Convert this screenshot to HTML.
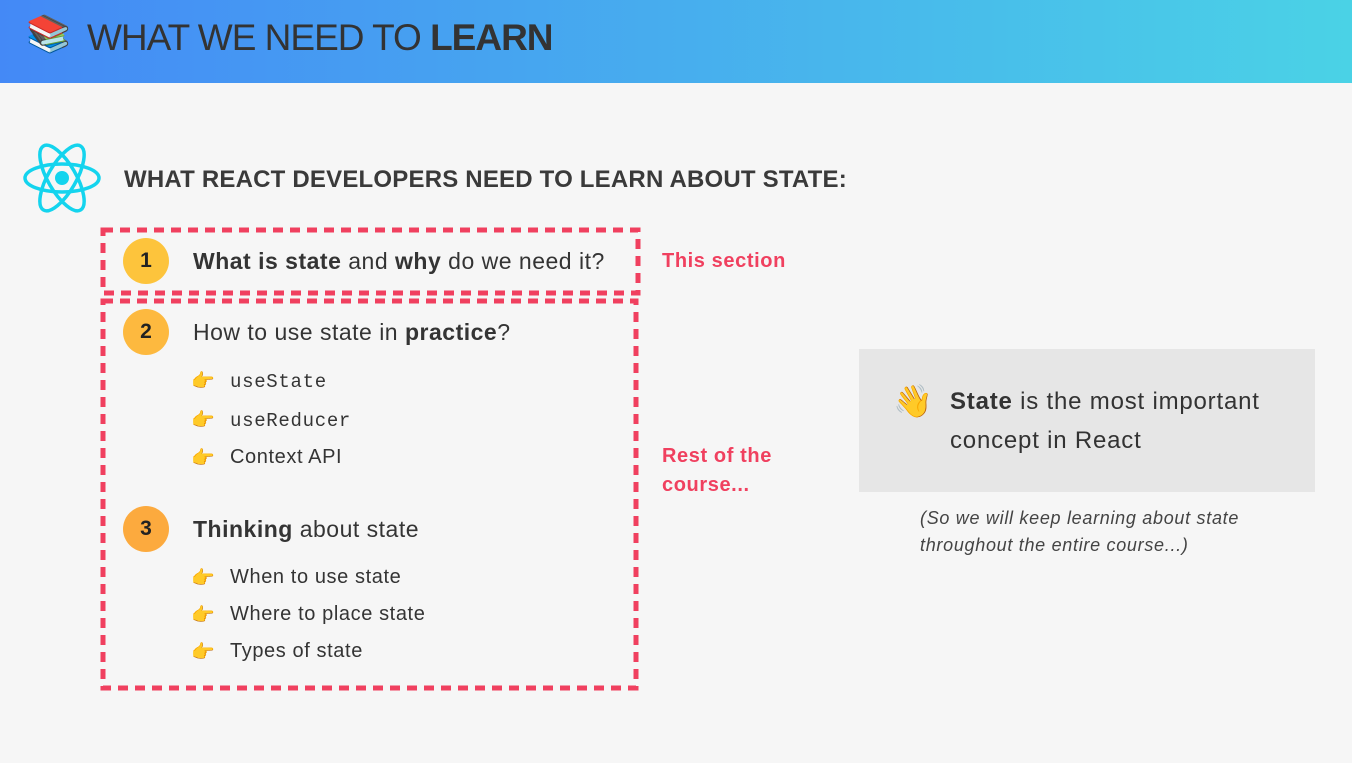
<!DOCTYPE html>
<html><head><meta charset="utf-8"><style>
*{margin:0;padding:0;box-sizing:border-box}
body{width:1352px;height:763px;background:#f6f6f6;font-family:"Liberation Sans",sans-serif;color:#343434;position:relative;overflow:hidden}
.hdr{position:absolute;left:0;top:0;width:1352px;height:83px;background:linear-gradient(90deg,#4489f6,#4ad2e6)}
.hdr h1{position:absolute;left:87px;top:17px;font-size:37px;font-weight:normal;color:#333;letter-spacing:-1px}
.abs{position:absolute;white-space:nowrap}
.circ{position:absolute;width:46px;height:46px;border-radius:50%;font-weight:bold;font-size:21px;text-align:center;line-height:46px;color:#222}
.t{font-size:23px;letter-spacing:0.5px}
.li{font-size:20px;letter-spacing:0.6px}
.mono{font-family:"Liberation Mono",monospace;font-size:19px;letter-spacing:0.7px}
.hand{position:absolute;font-size:19px}
.red{color:#f0405f;font-size:20px;font-weight:bold;letter-spacing:0.6px}
</style></head><body>
<div class="hdr"><span class="abs" style="left:26px;top:13px;font-size:36px">📚</span><h1>WHAT WE NEED TO <b>LEARN</b></h1></div>
<svg class="abs" style="left:22px;top:142px" width="80" height="72" viewBox="0 0 80 72"><g fill="none" stroke="#14d4ee" stroke-width="3.5"><ellipse cx="40" cy="36" rx="37" ry="14"/><ellipse cx="40" cy="36" rx="37" ry="14" transform="rotate(60 40 36)"/><ellipse cx="40" cy="36" rx="37" ry="14" transform="rotate(-60 40 36)"/></g><circle cx="40" cy="36" r="7" fill="#14d4ee"/></svg>
<div class="abs" style="left:124px;top:166px;font-size:24px;font-weight:bold;color:#3a3a3a;letter-spacing:0.2px">WHAT REACT DEVELOPERS NEED TO LEARN ABOUT STATE:</div>
<svg class="abs" style="left:0;top:0" width="1352" height="763"><g fill="none" stroke="#f0405f" stroke-width="5" stroke-dasharray="10 7"><rect x="103" y="230" width="535" height="63"/><rect x="103" y="301" width="533" height="387"/></g></svg>
<div class="circ" style="left:123px;top:238px;background:#fdc43c">1</div>
<div class="abs t" style="left:193px;top:248px"><b>What is state</b> and <b>why</b> do we need it?</div>
<div class="abs red" style="left:662px;top:250px">This section</div>
<div class="circ" style="left:123px;top:309px;background:#fdb93f">2</div>
<div class="abs t" style="left:193px;top:319px">How to use state in <b>practice</b>?</div>
<span class="hand" style="left:191px;top:369px">👉</span><div class="abs mono" style="left:230px;top:371px">useState</div>
<span class="hand" style="left:191px;top:408px">👉</span><div class="abs mono" style="left:230px;top:410px">useReducer</div>
<span class="hand" style="left:191px;top:446px">👉</span><div class="abs li" style="left:230px;top:446px">Context API</div>
<div class="circ" style="left:123px;top:506px;background:#fcaa3e">3</div>
<div class="abs t" style="left:193px;top:516px"><b>Thinking</b> about state</div>
<span class="hand" style="left:191px;top:566px">👉</span><div class="abs li" style="left:230px;top:566px">When to use state</div>
<span class="hand" style="left:191px;top:603px">👉</span><div class="abs li" style="left:230px;top:603px">Where to place state</div>
<span class="hand" style="left:191px;top:640px">👉</span><div class="abs li" style="left:230px;top:640px">Types of state</div>
<div class="abs red" style="left:662px;top:442px;line-height:29px">Rest of the<br>course...</div>
<div class="abs" style="left:859px;top:349px;width:456px;height:143px;background:#e6e6e6"></div>
<span class="abs" style="left:893px;top:382px;font-size:32px">👋</span>
<div class="abs" style="left:950px;top:382px;font-size:24px;line-height:39px;color:#333;letter-spacing:0.8px"><b>State</b> is the most important<br>concept in React</div>
<div class="abs" style="left:920px;top:505px;font-size:18px;font-style:italic;line-height:27px;color:#444;letter-spacing:0.7px">(So we will keep learning about state<br>throughout the entire course...)</div>
</body></html>
